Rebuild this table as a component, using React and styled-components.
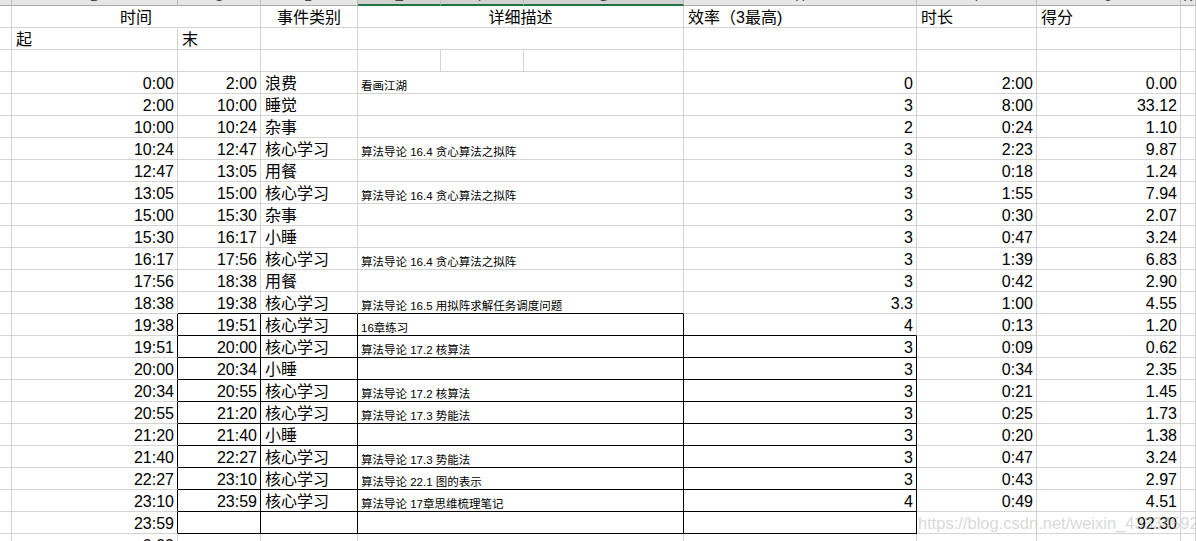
import React from "react";
import styled, { createGlobalStyle, css } from "styled-components";

const GlobalStyle = createGlobalStyle`
  html, body { margin: 0; padding: 0; background: #fff; overflow: hidden; }
  * { box-sizing: border-box; }
`;

const GRID = "#d4d4d4";
const FONT = `"Liberation Sans", "Noto Sans CJK SC", sans-serif`;

const Sheet = styled.div`
  position: relative;
  width: 1196px;
  height: 541px;
  overflow: hidden;
  font-family: ${FONT};
  color: #000;
`;

const Grid = styled.div`
  display: grid;
  grid-template-columns: 12px 166px 83px 97px 83px 83px 160px 233px 120px 144px 1fr;
  grid-template-rows: 6px;
  grid-auto-rows: 22px;
`;

const ColHeadRow = styled.div`
  display: contents;
`;

const ColHead = styled.div`
  height: 6px;
  overflow: hidden;
  background: #e6e6e6;
  border-right: 1px solid #bdbdbd;
  border-bottom: 1px solid ${(p) => (p.$selected ? "#217346" : "#ababab")};
  ${(p) =>
    p.$selected &&
    css`
      border-bottom-width: 2px;
      background: #d2d2d2;
    `}
  text-align: center;
  font-size: 14px;
  color: #444;
  line-height: 16px;
`;

const ColLetter = styled.span`
  display: block;
  margin-top: -12px;
`;

const Cell = styled.div`
  display: flex;
  align-items: ${(p) => (p.$small ? "flex-end" : "center")};
  justify-content: ${(p) =>
    p.$align === "right" ? "flex-end" : p.$align === "center" ? "center" : "flex-start"};
  grid-column: span ${(p) => p.$span || 1};
  border-right: 1px solid ${(p) => (p.$br ? "#000" : GRID)};
  border-bottom: 1px solid ${(p) => (p.$bb ? "#000" : GRID)};
  padding-top: ${(p) => (p.$small ? "0" : "3px")};
  padding-bottom: 0;
  padding-right: ${(p) => (p.$align === "right" ? "3px" : "0")};
  padding-left: ${(p) => (p.$align === "left" ? (p.$small ? "3px" : "4px") : "0")};
  font-size: ${(p) => (p.$small ? "11.5px" : "16px")};
  line-height: ${(p) => (p.$small ? "14px" : "20px")};
  white-space: nowrap;
  overflow: visible;
`;

const Watermark = styled.div`
  position: absolute;
  left: 918px;
  top: 514px;
  font-family: "Liberation Sans", sans-serif;
  font-size: 16.5px;
  color: rgba(190, 190, 190, 0.6);
  white-space: nowrap;
  pointer-events: none;
`;

const letters = ["", "B", "C", "D", "E", "F", "G", "H", "I", "J", "K"];

const rows = [
  ["0:00", "2:00", "浪费", "看画江湖", "0", "2:00", "0.00"],
  ["2:00", "10:00", "睡觉", "", "3", "8:00", "33.12"],
  ["10:00", "10:24", "杂事", "", "2", "0:24", "1.10"],
  ["10:24", "12:47", "核心学习", "算法导论 16.4 贪心算法之拟阵", "3", "2:23", "9.87"],
  ["12:47", "13:05", "用餐", "", "3", "0:18", "1.24"],
  ["13:05", "15:00", "核心学习", "算法导论 16.4 贪心算法之拟阵", "3", "1:55", "7.94"],
  ["15:00", "15:30", "杂事", "", "3", "0:30", "2.07"],
  ["15:30", "16:17", "小睡", "", "3", "0:47", "3.24"],
  ["16:17", "17:56", "核心学习", "算法导论 16.4 贪心算法之拟阵", "3", "1:39", "6.83"],
  ["17:56", "18:38", "用餐", "", "3", "0:42", "2.90"],
  ["18:38", "19:38", "核心学习", "算法导论 16.5 用拟阵求解任务调度问题", "3.3", "1:00", "4.55"],
  ["19:38", "19:51", "核心学习", "16章练习", "4", "0:13", "1.20"],
  ["19:51", "20:00", "核心学习", "算法导论 17.2 核算法", "3", "0:09", "0.62"],
  ["20:00", "20:34", "小睡", "", "3", "0:34", "2.35"],
  ["20:34", "20:55", "核心学习", "算法导论 17.2 核算法", "3", "0:21", "1.45"],
  ["20:55", "21:20", "核心学习", "算法导论 17.3 势能法", "3", "0:25", "1.73"],
  ["21:20", "21:40", "小睡", "", "3", "0:20", "1.38"],
  ["21:40", "22:27", "核心学习", "算法导论 17.3 势能法", "3", "0:47", "3.24"],
  ["22:27", "23:10", "核心学习", "算法导论 22.1 图的表示", "3", "0:43", "2.97"],
  ["23:10", "23:59", "核心学习", "算法导论 17章思维梳理笔记", "4", "0:49", "4.51"],
  ["23:59", "", "", "", "", "", "92.30"],
  ["0:00", "", "", "", "", "", ""],
];

const BORDER_START = 11;
const BORDER_END = 20;

function DataRow({ r, i }) {
  const inBox = i >= BORDER_START && i <= BORDER_END;
  const aboveBox = i === BORDER_START - 1;
  const hBox = i >= BORDER_START + 1 && i <= BORDER_END;
  const bottomBlack = inBox || aboveBox;
  return (
    <>
      <Cell />
      <Cell $align="right" $br={inBox}>{r[0]}</Cell>
      <Cell $align="right" $br={inBox} $bb={bottomBlack}>{r[1]}</Cell>
      <Cell $align="left" $br={inBox} $bb={bottomBlack}>{r[2]}</Cell>
      <Cell $span={3} $align="left" $small $br={inBox} $bb={bottomBlack}>{r[3]}</Cell>
      <Cell $align="right" $br={hBox} $bb={inBox}>{r[4]}</Cell>
      <Cell $align="right">{r[5]}</Cell>
      <Cell $align="right">{r[6]}</Cell>
      <Cell />
    </>
  );
}

export default function App() {
  return (
    <>
      <GlobalStyle />
      <Sheet>
        <Grid>
          <ColHeadRow>
            {letters.map((l, idx) => (
              <ColHead key={idx} $selected={idx >= 4 && idx <= 6}>
                <ColLetter>{l}</ColLetter>
              </ColHead>
            ))}
          </ColHeadRow>

          <Cell />
          <Cell $span={2} $align="center">时间</Cell>
          <Cell $align="center">事件类别</Cell>
          <Cell $span={3} $align="center">详细描述</Cell>
          <Cell $align="left">效率（3最高)</Cell>
          <Cell $align="left">时长</Cell>
          <Cell $align="left">得分</Cell>
          <Cell />

          <Cell />
          <Cell $align="left">起</Cell>
          <Cell $align="left">末</Cell>
          <Cell />
          <Cell $span={3} />
          <Cell />
          <Cell />
          <Cell />
          <Cell />

          {Array.from({ length: 11 }).map((_, k) => (
            <Cell key={k} />
          ))}

          {rows.map((r, i) => (
            <DataRow key={i} r={r} i={i} />
          ))}
        </Grid>
        <Watermark>https://blog.csdn.net/weixin_43334592</Watermark>
      </Sheet>
    </>
  );
}
